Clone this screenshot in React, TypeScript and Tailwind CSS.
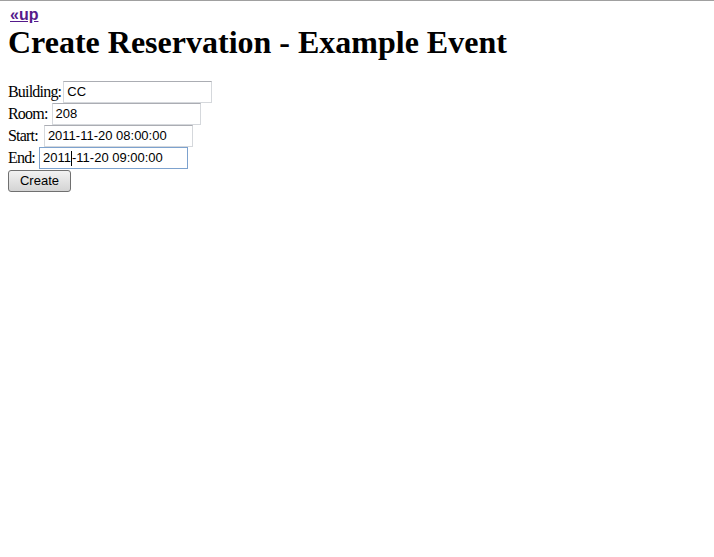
import React from "react";

function Field({ label, value, focused, caretAfter, gap }: { label: string; value: string; focused?: boolean; caretAfter?: number; gap?: string }) {
  return (
    <div className="flex items-center h-[22px]">
      <span className="text-[16px] text-black tracking-[-0.8px]" style={{ fontFamily: '"Liberation Serif", serif' }}>{label}</span>
      <div
        className={
          (gap ?? "ml-[4px]") +
          " h-[22px] w-[149px] border px-[3px] flex items-center text-[13px] text-black bg-white " +
          (focused ? "border-[#7da2ce]" : "border-[#d5d8dc] border-t-[#abadb3]")
        }
        style={{ fontFamily: '"Liberation Sans", Arial, sans-serif' }}
      >
        {caretAfter !== undefined ? (
          <>
            <span>{value.slice(0, caretAfter)}</span>
            <span className="inline-block w-px h-[15px] bg-black" />
            <span>{value.slice(caretAfter)}</span>
          </>
        ) : (
          value
        )}
      </div>
    </div>
  );
}

export default function App() {
  return (
    <div className="min-h-[557px] bg-white border-t border-[#a0a0a0] px-2">
      <div className="pt-[6px] pl-[2px] h-[22px] flex items-start">
        <a
          href="#"
          className="text-[16px] font-bold underline text-[#551a8b] leading-[16px]"
          style={{ fontFamily: '"Liberation Sans", Arial, sans-serif' }}
        >
          «up
        </a>
      </div>
      <h1
        className="text-[32px] font-bold text-black leading-[32px] mt-[3px]"
        style={{ fontFamily: '"Liberation Serif", "Times New Roman", serif' }}
      >
        Create Reservation - Example Event
      </h1>
      <div className="mt-[23px] flex flex-col">
        <Field label="Building:" value="CC" gap="ml-[2px]" />
        <Field label="Room:" value="208" />
        <Field label="Start:" value="2011-11-20 08:00:00" gap="ml-[6px]" />
        <Field label="End:" value="2011-11-20 09:00:00" focused caretAfter={4} />
        <div className="mt-[1px] flex">
          <button
            className="h-[22px] w-[63px] rounded-[3px] border border-[#707070] bg-gradient-to-b from-[#f2f2f2] to-[#d4d4d4] text-[13px] text-black"
            style={{ fontFamily: '"Liberation Sans", Arial, sans-serif' }}
          >
            Create
          </button>
        </div>
      </div>
    </div>
  );
}
